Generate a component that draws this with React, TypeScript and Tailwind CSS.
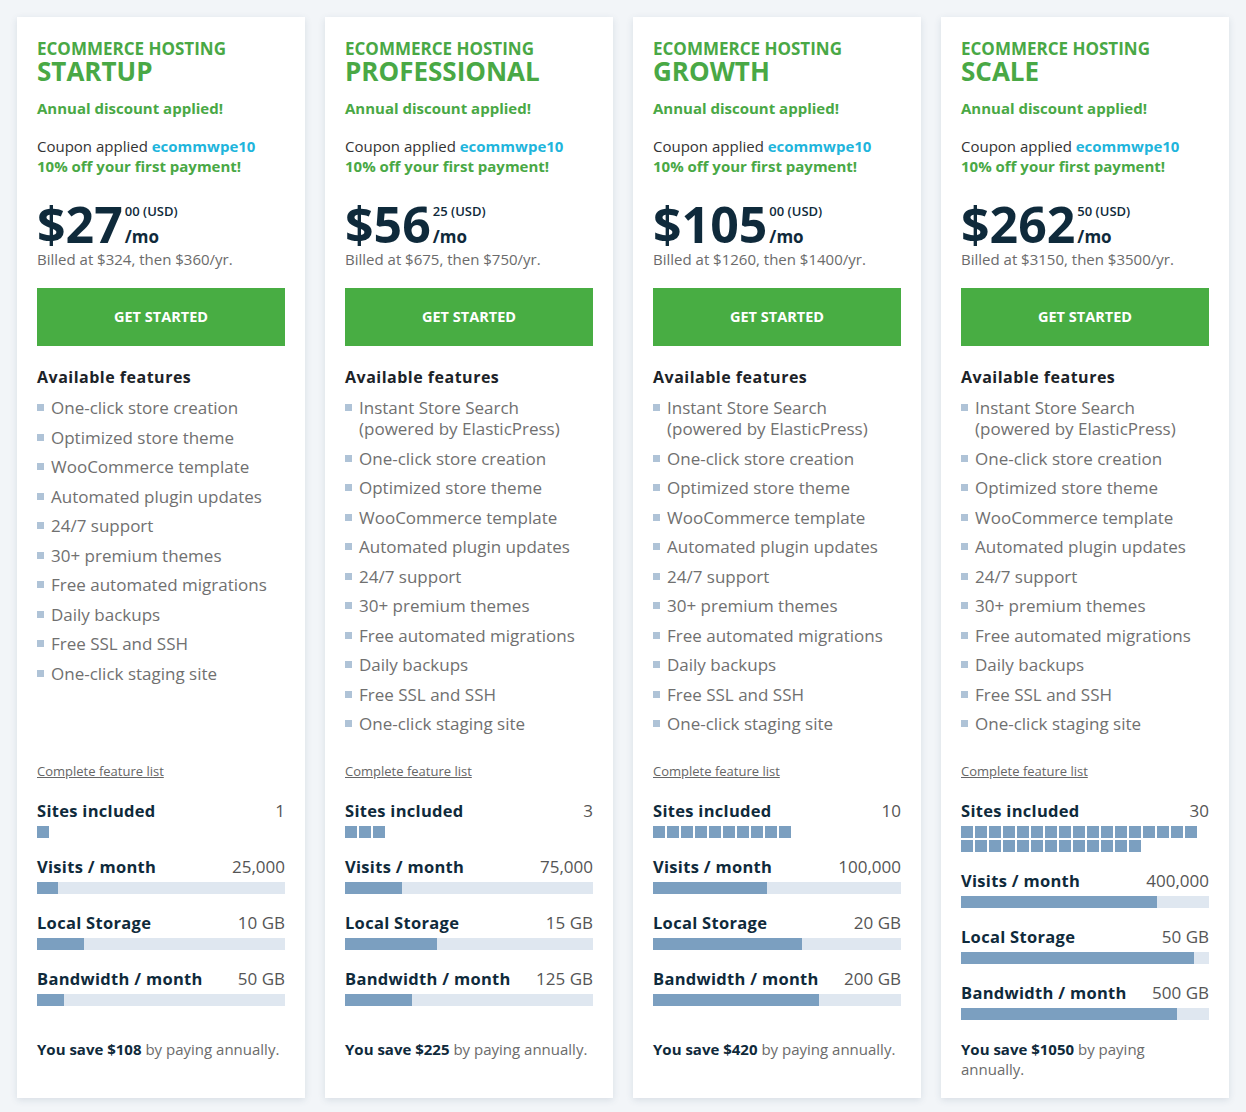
import React from 'react';

interface Metric {
  label: string;
  value: string;
  fill: number; // px out of 248
}

interface Plan {
  name: string;
  price: string;
  cents: string;
  billed: string;
  search: boolean;
  sites: number;
  metrics: Metric[];
  save: string;
}

const baseFeatures = [
  'One-click store creation',
  'Optimized store theme',
  'WooCommerce template',
  'Automated plugin updates',
  '24/7 support',
  '30+ premium themes',
  'Free automated migrations',
  'Daily backups',
  'Free SSL and SSH',
  'One-click staging site',
];

const plans: Plan[] = [
  {
    name: 'STARTUP',
    price: '$27',
    cents: '00',
    billed: 'Billed at $324, then $360/yr.',
    search: false,
    sites: 1,
    metrics: [
      { label: 'Visits / month', value: '25,000', fill: 21 },
      { label: 'Local Storage', value: '10 GB', fill: 47 },
      { label: 'Bandwidth / month', value: '50 GB', fill: 27 },
    ],
    save: '$108',
  },
  {
    name: 'PROFESSIONAL',
    price: '$56',
    cents: '25',
    billed: 'Billed at $675, then $750/yr.',
    search: true,
    sites: 3,
    metrics: [
      { label: 'Visits / month', value: '75,000', fill: 57 },
      { label: 'Local Storage', value: '15 GB', fill: 92 },
      { label: 'Bandwidth / month', value: '125 GB', fill: 67 },
    ],
    save: '$225',
  },
  {
    name: 'GROWTH',
    price: '$105',
    cents: '00',
    billed: 'Billed at $1260, then $1400/yr.',
    search: true,
    sites: 10,
    metrics: [
      { label: 'Visits / month', value: '100,000', fill: 114 },
      { label: 'Local Storage', value: '20 GB', fill: 149 },
      { label: 'Bandwidth / month', value: '200 GB', fill: 166 },
    ],
    save: '$420',
  },
  {
    name: 'SCALE',
    price: '$262',
    cents: '50',
    billed: 'Billed at $3150, then $3500/yr.',
    search: true,
    sites: 30,
    metrics: [
      { label: 'Visits / month', value: '400,000', fill: 196 },
      { label: 'Local Storage', value: '50 GB', fill: 233 },
      { label: 'Bandwidth / month', value: '500 GB', fill: 216 },
    ],
    save: '$1050',
  },
];

function Bullet() {
  return <span className="mt-[7px] mr-[7px] w-[7px] h-[7px] shrink-0 bg-[#afc3d7]" />;
}

function MetricRow({ label, value, children }: { label: string; value: string; children: React.ReactNode }) {
  return (
    <div>
      <div className="flex justify-between items-center h-[22px]">
        <span className="text-[16.5px] font-bold text-[#0f2a3b] tracking-[0.3px]">{label}</span>
        <span className="text-[17px] text-[#555]">{value}</span>
      </div>
      <div className="mt-[4px]">{children}</div>
    </div>
  );
}

function PlanCard({ plan }: { plan: Plan }) {
  return (
    <div className="bg-white shadow-[0_2px_7px_rgba(40,70,100,0.13)] px-5 pt-[23px] pb-[19px] flex flex-col">
      {/* Heading */}
      <div className="text-[#49a845] font-bold">
        <div className="text-[17px] leading-[18px]">ECOMMERCE HOSTING</div>
        <div className="text-[26px] leading-[26px]">{plan.name}</div>
      </div>
      <div className="mt-[13px] text-[15px] leading-[22px] font-bold text-[#49a845]">Annual discount applied!</div>

      <div className="mt-[17px] text-[15px] leading-[20px]">
        <div className="text-[#333]">
          Coupon applied <span className="font-bold text-[#1fb5dc]">ecommwpe10</span>
        </div>
        <div className="font-bold text-[#49a845]">10% off your first payment!</div>
      </div>

      {/* Price */}
      <div className="mt-[23px] flex items-end h-[50px] text-[#0f2a3b]">
        <span className="text-[50px] leading-[50px] font-bold">{plan.price}</span>
        <div className="flex flex-col ml-[2px]">
          <span className="text-[13px] leading-[14px] font-semibold">{plan.cents} (USD)</span>
          <span className="mt-[7px] text-[17px] leading-[24px] font-bold">/mo</span>
        </div>
      </div>
      <div className="text-[15px] leading-[20px] text-[#6b6b6b]">{plan.billed}</div>

      <button className="mt-[19px] h-[58px] w-full shrink-0 bg-[#48ad43] text-white text-[14.5px] font-bold">
        GET STARTED
      </button>

      {/* Features */}
      <div className="mt-[20px] text-[16px] leading-[22px] font-bold text-[#1c2328] tracking-[0.5px]">
        Available features
      </div>
      <ul className="mt-[9px] h-[346px] flex flex-col gap-[8.5px]">
        {plan.search && (
          <li className="flex text-[17px] leading-[21px] text-[#707070]">
            <Bullet />
            <span>
              Instant Store Search
              <br />
              (powered by ElasticPress)
            </span>
          </li>
        )}
        {baseFeatures.map((f) => (
          <li key={f} className="flex text-[17px] leading-[21px] text-[#707070]">
            <Bullet />
            <span>{f}</span>
          </li>
        ))}
      </ul>

      <a href="#" className="mt-[20px] text-[13px] leading-[16px] text-[#666] underline">
        Complete feature list
      </a>

      {/* Metrics */}
      <div className="mt-[21px] h-[239px] flex flex-col gap-[18px]">
        <MetricRow label="Sites included" value={String(plan.sites)}>
          <div className="flex flex-wrap gap-[2px]">
            {Array.from({ length: plan.sites }).map((_, i) => (
              <span key={i} className="w-[12px] h-[12px] bg-[#7b9fc0]" />
            ))}
          </div>
        </MetricRow>
        {plan.metrics.map((m) => (
          <MetricRow key={m.label} label={m.label} value={m.value}>
            <div className="h-[12px] bg-[#dfe7f0]">
              <div className="h-full bg-[#7b9fc0]" style={{ width: m.fill }} />
            </div>
          </MetricRow>
        ))}
      </div>

      <p className="text-[15px] leading-[20px] text-[#6b6b6b]">
        <span className="font-bold text-[#0f2a3b]">You save {plan.save}</span> by paying annually.
      </p>
    </div>
  );
}

export default function App() {
  return (
    <div
      className="min-h-screen bg-[#f2f5f8] px-[17px] pt-[17px] pb-[14px]"
      style={{ fontFamily: '"Open Sans", "Noto Sans", sans-serif' }}
    >
      <div className="grid grid-cols-4 gap-5">
        {plans.map((p) => (
          <PlanCard key={p.name} plan={p} />
        ))}
      </div>
    </div>
  );
}
